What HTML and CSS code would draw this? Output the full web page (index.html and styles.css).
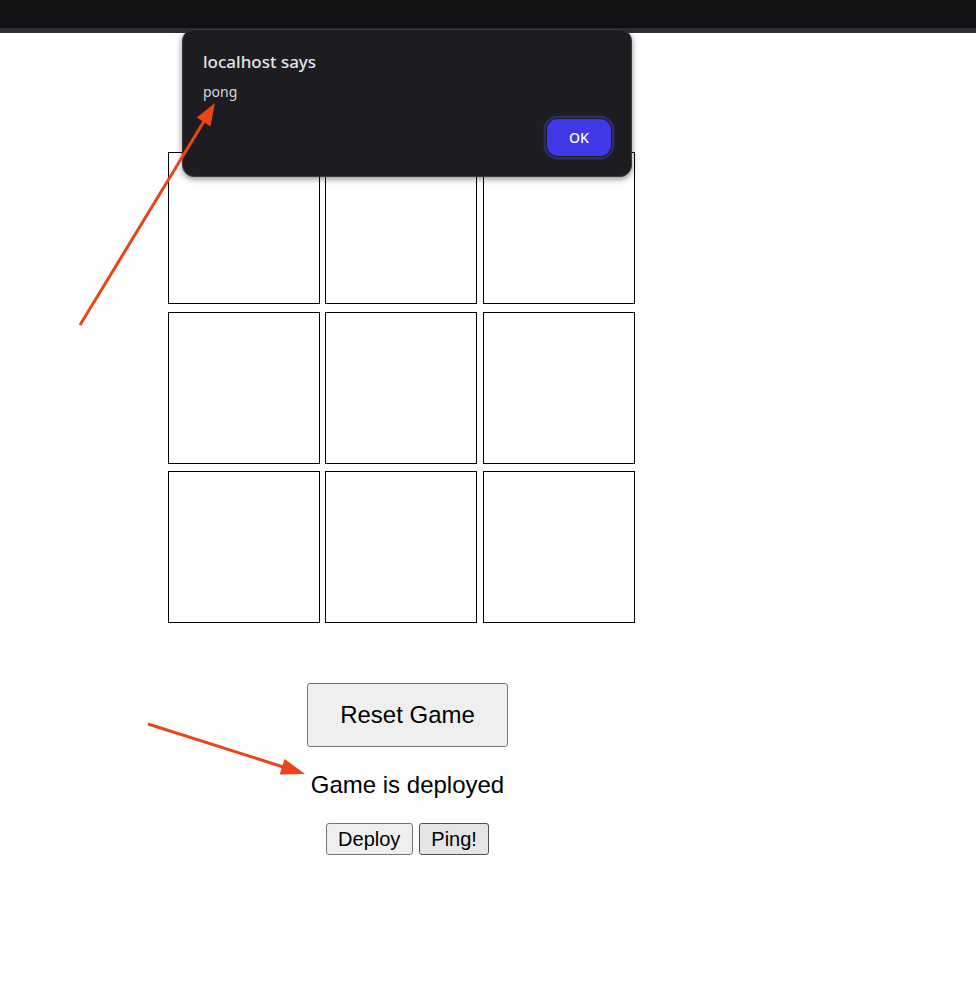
FILE: index.html
```html
<!DOCTYPE html>
<html lang="en">
<head>
<meta charset="utf-8">
<title>Tic Tac Toe</title>
<link rel="stylesheet" href="styles.css">
</head>
<body>
<div class="topbar"></div>
<main class="page">
  <div class="board">
    <div class="cell"></div>
    <div class="cell"></div>
    <div class="cell"></div>
    <div class="cell"></div>
    <div class="cell"></div>
    <div class="cell"></div>
    <div class="cell"></div>
    <div class="cell"></div>
    <div class="cell"></div>
  </div>
  <div class="controls">
    <button class="reset">Reset Game</button>
    <p class="status">Game is deployed</p>
    <div class="actions">
      <button class="small">Deploy</button>
      <button class="small hovered">Ping!</button>
    </div>
  </div>
</main>

<div class="dialog">
  <div class="dialog-title">localhost says</div>
  <div class="dialog-msg">pong</div>
  <div class="dialog-actions">
    <button class="ok">OK</button>
  </div>
</div>

<svg class="annotations" width="976" height="988" viewBox="0 0 976 988">
  <line x1="80" y1="325" x2="206" y2="118" stroke="#ec4319" stroke-width="3" />
  <polygon points="215,103 210.4,126.4 196.8,117.4" fill="#ec4319" />
  <line x1="148" y1="724" x2="285" y2="767.5" stroke="#ec4319" stroke-width="3" />
  <polygon points="305,774 279.7,774.5 284.5,758.9" fill="#ec4319" />
</svg>
</body>
</html>
```

FILE: styles.css
```css
html, body {
  margin: 0;
  padding: 0;
  background: #ffffff;
}

body {
  position: relative;
  width: 976px;
  height: 988px;
  overflow: hidden;
  font-family: "Liberation Sans", Arial, sans-serif;
}

.topbar {
  height: 28px;
  background: #121214;
  border-bottom: 5px solid #2e2e33;
}

.page {
  width: 815px;
  padding-top: 119px;
}

.board {
  display: grid;
  grid-template-columns: 157px 158px 152px;
  grid-template-rows: 160px 159px 152px;
  margin-left: 168px;
  width: max-content;
}

.cell {
  box-sizing: border-box;
  width: 152px;
  height: 152px;
  border: 1px solid #000;
  background: #fff;
}

.controls {
  display: flex;
  flex-direction: column;
  align-items: center;
  margin-top: 60px;
}

.reset {
  box-sizing: border-box;
  height: 64px;
  padding: 0 32px;
  font-family: "Liberation Sans", Arial, sans-serif;
  font-size: 24px;
  line-height: 28px;
  color: #000;
  background: #efefef;
  border: 1px solid #767676;
  border-radius: 3px;
}

.status {
  margin: 24px 0 0;
  font-size: 24px;
  line-height: 28px;
  color: #000;
}

.actions {
  display: flex;
  gap: 6px;
  margin-top: 24px;
}

.small {
  box-sizing: border-box;
  height: 32px;
  padding: 0 11.5px;
  font-family: "Liberation Sans", Arial, sans-serif;
  font-size: 20px;
  line-height: 23px;
  color: #000;
  background: #efefef;
  border: 1px solid #767676;
  border-radius: 3px;
}

.small.hovered {
  background: #e5e5e5;
  border-color: #4f4f4f;
}

.dialog {
  position: absolute;
  left: 182px;
  top: 29px;
  box-sizing: border-box;
  width: 450px;
  height: 148px;
  padding: 21px 20px 0 20px;
  background: #1d1c21;
  border: 1px solid #3b3a41;
  border-radius: 12px;
  box-shadow: 0 2px 6px rgba(0, 0, 0, 0.45);
  font-family: "Noto Sans", "Open Sans", sans-serif;
  color: #e3e3e8;
}

.dialog-title {
  font-size: 17px;
  line-height: 22px;
  font-weight: 500;
}

.dialog-msg {
  margin-top: 9px;
  font-size: 14px;
  line-height: 20px;
  color: #d6d6dc;
}

.dialog-actions {
  display: flex;
  justify-content: flex-end;
  margin-top: 17px;
}

.ok {
  box-sizing: border-box;
  width: 64px;
  height: 37px;
  padding: 0;
  border: none;
  border-radius: 11px;
  background: #4038e6;
  color: #ffffff;
  font-family: "Noto Sans", "Open Sans", sans-serif;
  font-size: 14px;
  font-weight: 500;
  box-shadow: 0 0 0 1px #1d1c21, 0 0 0 3.5px #2c2a6a;
}

.annotations {
  position: absolute;
  left: 0;
  top: 0;
  pointer-events: none;
}
```
